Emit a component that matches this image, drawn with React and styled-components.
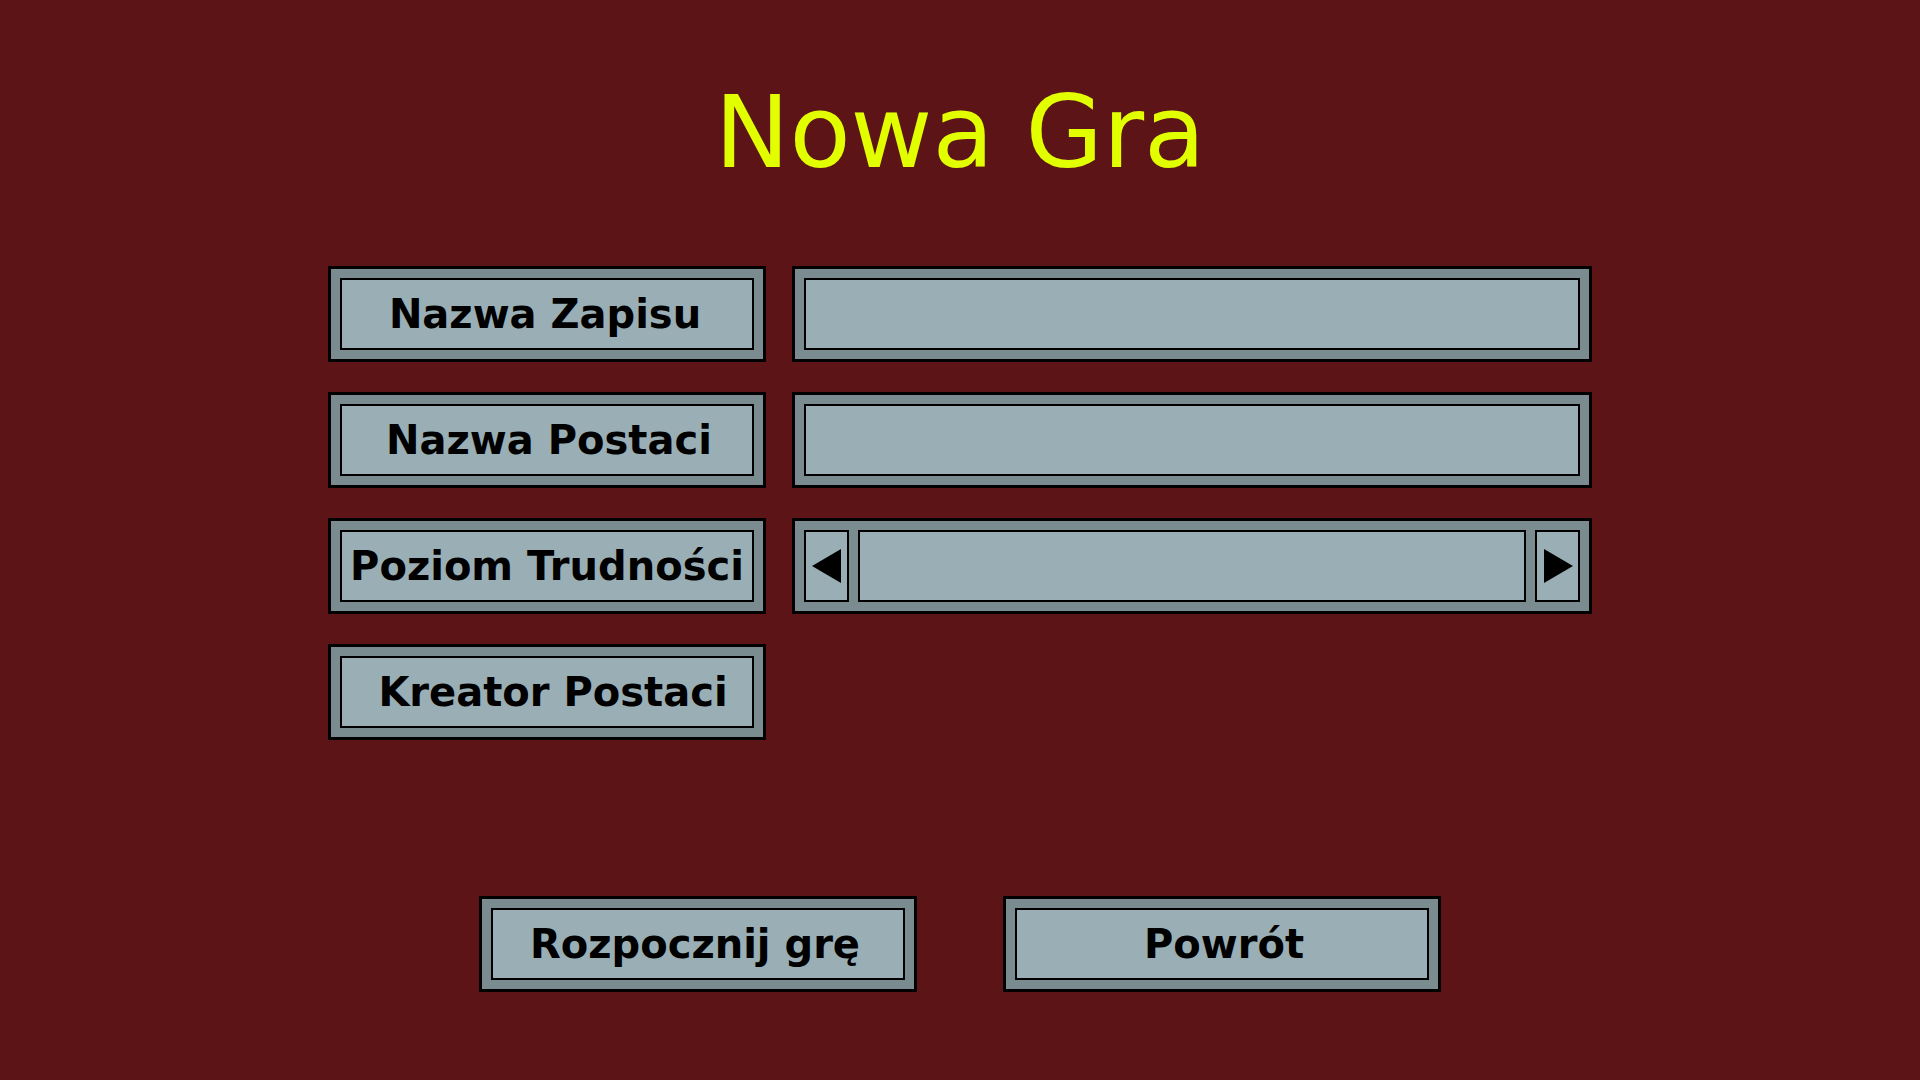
import React, { useState } from 'react'
import styled, { createGlobalStyle } from 'styled-components'

const GlobalStyle = createGlobalStyle`
    html, body {
        margin: 0;
        padding: 0;
        background: #5c1416;
    }
    body {
        font-family: "DejaVu Sans", "Liberation Sans", sans-serif;
    }
`

const Screen = styled.div`
    width: 1920px;
    height: 1080px;
    background: #5c1416;
    display: flex;
    flex-direction: column;
    align-items: center;
    overflow: hidden;
`

const Title = styled.h1`
    margin: 83px 0 0 0;
    font-size: 100px;
    line-height: 100px;
    font-weight: normal;
    color: #e2ff00;
`

const Form = styled.div`
    margin-top: 83px;
    display: grid;
    grid-template-columns: 438px 800px;
    grid-auto-rows: 96px;
    column-gap: 26px;
    row-gap: 30px;
`

const Frame = styled.div`
    box-sizing: border-box;
    width: ${p => p.width || '100%'};
    height: 96px;
    border: 3px solid #000;
    background: #7a8c90;
    padding: 9px;
    display: flex;
    gap: 9px;
    cursor: ${p => (p.clickable ? 'pointer' : 'default')};
`

const Inner = styled.div`
    box-sizing: border-box;
    flex: 1;
    border: 2px solid #000;
    background: #9aafb5;
    display: flex;
    align-items: center;
    justify-content: center;
    padding-left: ${p => p.shift > 0 ? p.shift * 2 : 0}px;
    padding-right: ${p => p.shift < 0 ? -p.shift * 2 : 0}px;
    font-size: 40px;
    font-weight: bold;
    color: #000;
    white-space: nowrap;
`

const TextInput = styled.input`
    box-sizing: border-box;
    flex: 1;
    min-width: 0;
    border: 2px solid #000;
    background: #9aafb5;
    font-family: "DejaVu Sans", sans-serif;
    font-size: 36px;
    padding: 0 12px;
    outline: none;
`

const ArrowBox = styled.button`
    box-sizing: border-box;
    width: 45px;
    flex: none;
    border: 2px solid #000;
    background: #9aafb5;
    padding: 0;
    display: flex;
    align-items: center;
    justify-content: center;
    cursor: pointer;
`

const Footer = styled.div`
    margin-top: 156px;
    display: flex;
    gap: 86px;
`

const levels = ['', 'Łatwy', 'Normalny', 'Trudny']

const Arrow = ({ dir }) => (
    <svg width="30" height="34" viewBox="0 0 30 34">
        {dir === 'left'
            ? <polygon points="0,17 29,0 29,34" fill="#000" />
            : <polygon points="1,0 30,17 1,34" fill="#000" />}
    </svg>
)

const MenuButton = ({ label, width, shift = 0 }) => (
    <Frame width={width} clickable>
        <Inner shift={shift}>{label}</Inner>
    </Frame>
)

const App = () => {
    const [saveName, setSaveName] = useState('')
    const [heroName, setHeroName] = useState('')
    const [level, setLevel] = useState(0)

    return (
        <Screen>
            <GlobalStyle />
            <Title>Nowa Gra</Title>
            <Form>
                <MenuButton label="Nazwa Zapisu" shift={-2} />
                <Frame>
                    <TextInput value={saveName} onChange={e => setSaveName(e.target.value)} />
                </Frame>
                <MenuButton label="Nazwa Postaci" shift={2} />
                <Frame>
                    <TextInput value={heroName} onChange={e => setHeroName(e.target.value)} />
                </Frame>
                <MenuButton label="Poziom Trudności" />
                <Frame>
                    <ArrowBox onClick={() => setLevel((level + levels.length - 1) % levels.length)}>
                        <Arrow dir="left" />
                    </ArrowBox>
                    <Inner>{levels[level]}</Inner>
                    <ArrowBox onClick={() => setLevel((level + 1) % levels.length)}>
                        <Arrow dir="right" />
                    </ArrowBox>
                </Frame>
                <MenuButton label="Kreator Postaci" shift={6} />
            </Form>
            <Footer>
                <MenuButton label="Rozpocznij grę" width="438px" shift={-3} />
                <MenuButton label="Powrót" width="438px" shift={2} />
            </Footer>
        </Screen>
    )
}

export default App
